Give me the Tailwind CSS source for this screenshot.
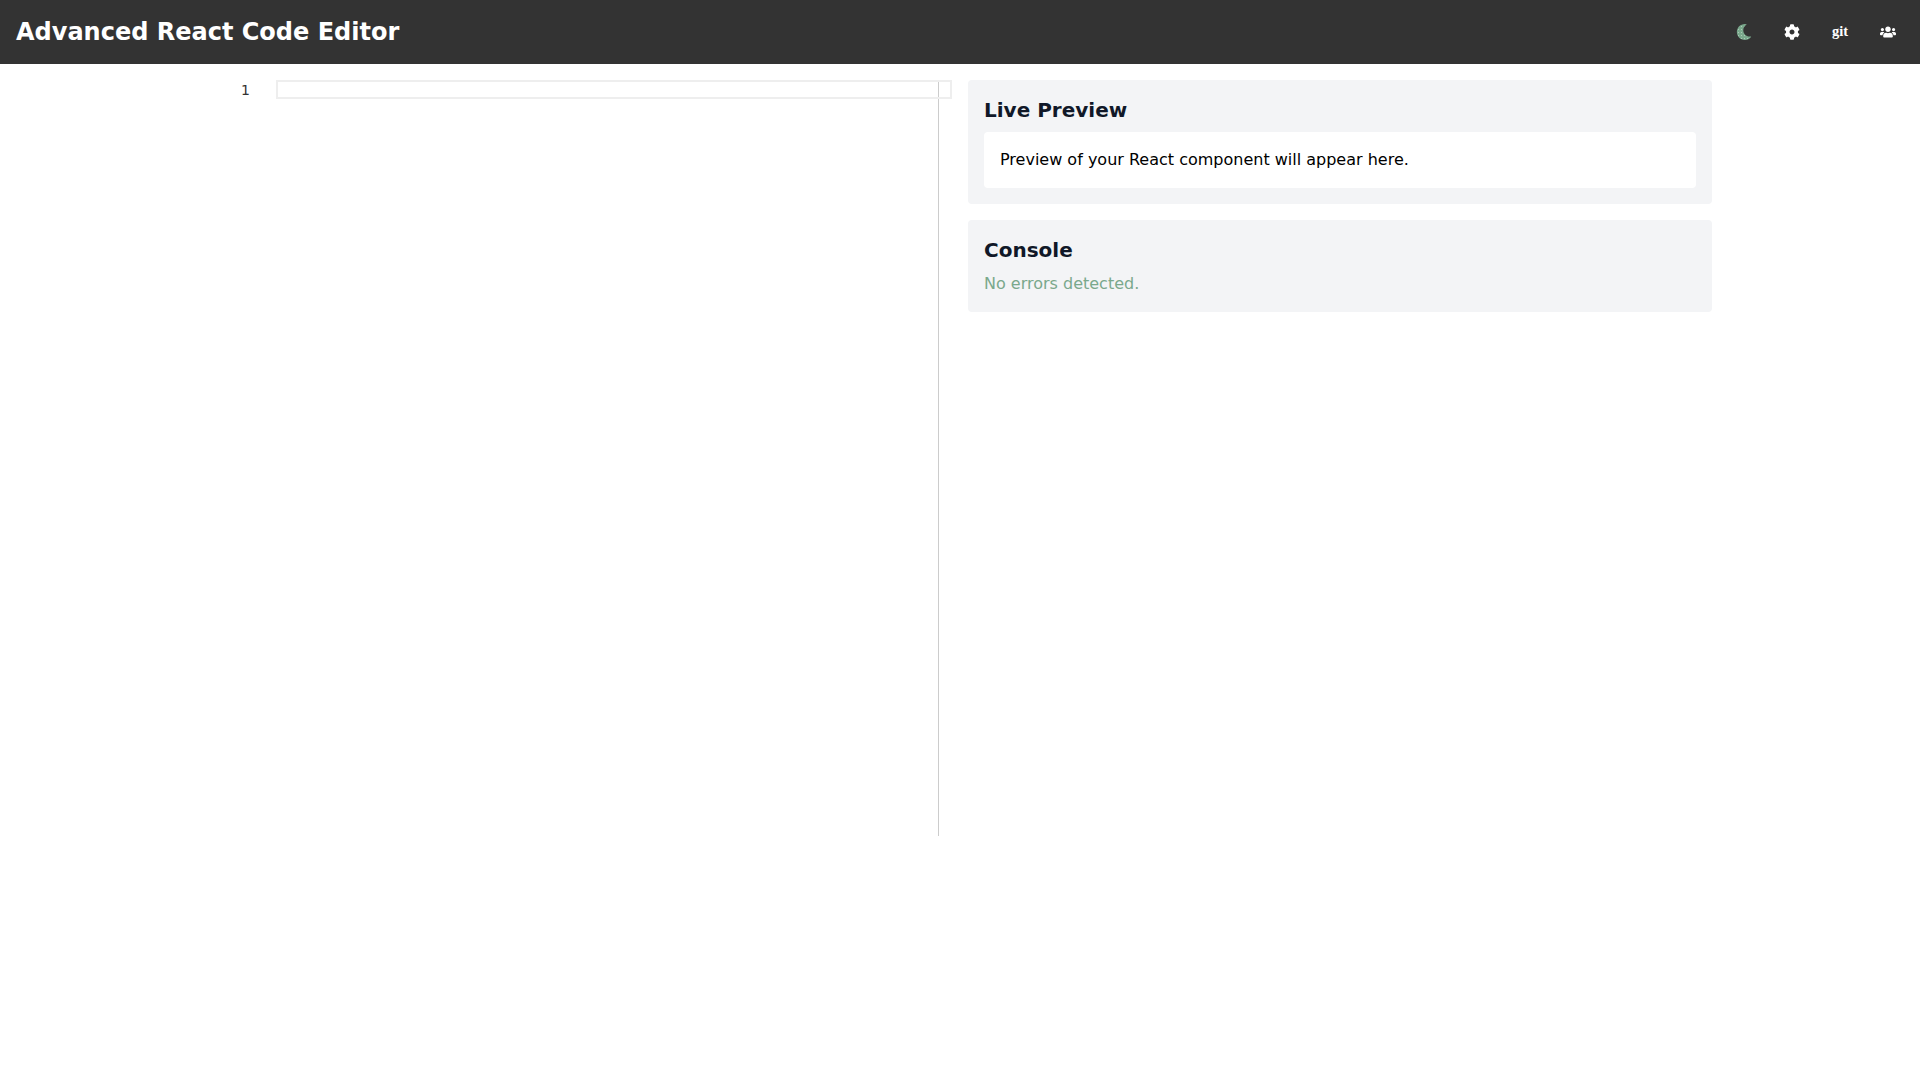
<!DOCTYPE html>
<html lang="en">
<head>
    <meta charset="UTF-8">
    <meta name="viewport" content="width=device-width, initial-scale=1.0">
    <title>Advanced React Code Editor</title>
    <script src="https://cdn.jsdelivr.net/npm/@tailwindcss/browser@4"></script>
</head>
<body class="bg-white font-['DejaVu_Sans',sans-serif] text-black">
<header class="h-16 bg-[#333333] flex items-center justify-between px-4 text-white">
    <h1 class="text-2xl font-bold">Advanced React Code Editor</h1>
    <div class="flex items-center gap-4">
        <button class="p-2 text-[#7aa88c]">
            <svg class="w-4 h-4 block" viewBox="0 0 512 512" fill="currentColor">
                <defs>
                    <pattern id="moon-dots" x="32" y="32" width="96" height="96" patternUnits="userSpaceOnUse">
                        <rect width="96" height="96" fill="#7aa88c"/>
                        <rect x="32" y="32" width="26" height="26" fill="#c4dccd"/>
                    </pattern>
                </defs>
                <path fill="url(#moon-dots)" d="M283.211 512c78.962 0 151.079-35.925 198.857-94.792 7.068-8.708-.639-21.43-11.562-19.35-124.203 23.654-238.262-71.576-238.262-196.954 0-72.222 38.662-138.635 101.498-174.394 9.686-5.512 7.25-20.197-3.756-22.23A258.156 258.156 0 0 0 283.211 0c-141.309 0-256 114.511-256 256 0 141.309 114.511 256 256 256z"/>
            </svg>
        </button>
        <button class="p-2">
            <svg class="w-4 h-4 block" viewBox="0 0 512 512" fill="currentColor"><path d="M487.4 315.7l-42.6-24.6c4.3-23.2 4.3-47 0-70.2l42.6-24.6c4.9-2.8 7.1-8.6 5.5-14-11.1-35.6-30-67.8-54.7-94.6-3.8-4.1-10-5.1-14.8-2.3L380.8 110c-17.9-15.4-38.5-27.3-60.8-35.1V25.8c0-5.6-3.9-10.5-9.4-11.7-36.7-8.2-74.3-7.8-109.2 0-5.5 1.2-9.4 6.1-9.4 11.7V75c-22.2 7.9-42.8 19.8-60.8 35.1L88.7 85.5c-4.9-2.8-11-1.9-14.8 2.3-24.7 26.7-43.6 58.9-54.7 94.6-1.7 5.4.6 11.2 5.5 14L67.3 221c-4.3 23.2-4.3 47 0 70.2l-42.6 24.6c-4.9 2.8-7.1 8.6-5.5 14 11.1 35.6 30 67.8 54.7 94.6 3.8 4.1 10 5.1 14.8 2.3l42.6-24.6c17.9 15.4 38.5 27.3 60.8 35.1v49.2c0 5.6 3.9 10.5 9.4 11.7 36.7 8.2 74.3 7.8 109.2 0 5.5-1.2 9.4-6.1 9.4-11.7v-49.2c22.2-7.9 42.8-19.8 60.8-35.1l42.6 24.6c4.9 2.8 11 1.9 14.8-2.3 24.7-26.7 43.6-58.9 54.7-94.6 1.5-5.5-.7-11.3-5.6-14.1zM256 336c-44.1 0-80-35.9-80-80s35.9-80 80-80 80 35.9 80 80-35.9 80-80 80z"/></svg>
        </button>
        <button class="p-2">
            <span class="block w-4 h-4 leading-[14px] text-center text-[14.5px] font-bold font-['Liberation_Serif',serif]">git</span>
        </button>
        <button class="p-2">
            <svg class="w-4 h-4 block" viewBox="0 0 640 512" fill="currentColor"><path d="M96 224c35.3 0 64-28.7 64-64s-28.7-64-64-64-64 28.7-64 64 28.7 64 64 64zm448 0c35.3 0 64-28.7 64-64s-28.7-64-64-64-64 28.7-64 64 28.7 64 64 64zm32 32h-64c-17.6 0-33.5 7.1-45.1 18.6 40.3 22.1 68.9 62 75.1 109.4h66c17.7 0 32-14.3 32-32v-32c0-35.3-28.7-64-64-64zm-256 0c61.9 0 112-50.1 112-112S381.9 32 320 32 208 82.1 208 144s50.1 112 112 112zm76.8 32h-8.3c-20.8 10-43.9 16-68.5 16s-47.6-6-68.5-16h-8.3C179.6 288 128 339.6 128 403.2V432c0 26.5 21.5 48 48 48h288c26.5 0 48-21.5 48-48v-28.8c0-63.6-51.6-115.2-115.2-115.2zm-223.7-13.4C161.5 263.1 145.6 256 128 256H64c-35.3 0-64 28.7-64 64v32c0 17.7 14.3 32 32 32h65.9c6.3-47.4 34.9-87.3 75.2-109.4z"/></svg>
        </button>
    </div>
</header>

<main class="max-w-[1536px] mx-auto p-4 grid grid-cols-2 gap-4">
    <!-- editor -->
    <div class="h-[756px] mr-[13px] border-r border-[#cccccc] flex items-start">
        <div class="w-[68px] shrink-0 pl-[33px] text-sm leading-5 text-[#333333] font-['DejaVu_Sans',sans-serif]">1</div>
        <div class="w-[676px] shrink-0 h-[19px] border-2 border-[#eeeeee]"></div>
    </div>

    <!-- preview + console -->
    <div class="flex flex-col gap-4 items-stretch self-start">
        <section class="bg-gray-100 rounded p-4">
            <h2 class="text-xl font-bold text-gray-900 mb-2">Live Preview</h2>
            <div class="bg-white rounded p-4">Preview of your React component will appear here.</div>
        </section>
        <section class="bg-gray-100 rounded p-4">
            <h2 class="text-xl font-bold text-gray-900 mb-2">Console</h2>
            <p class="text-[#7aa88c]">No errors detected.</p>
        </section>
    </div>
</main>
</body>
</html>
